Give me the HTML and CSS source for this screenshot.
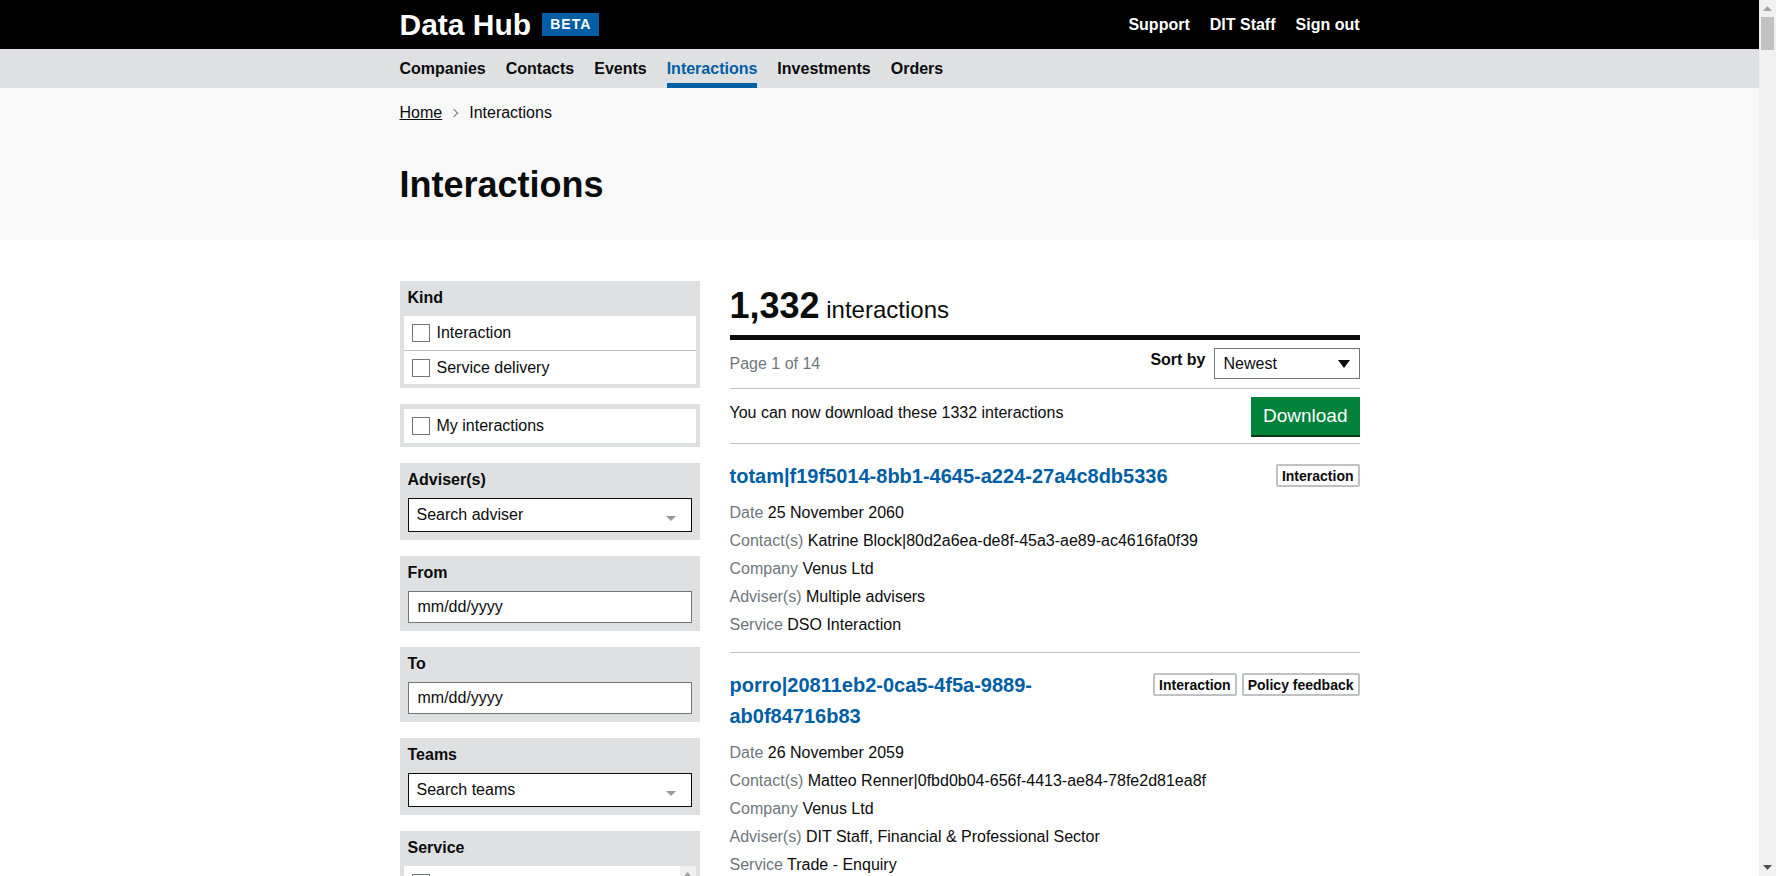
FILE: index.html
```html
<!DOCTYPE html>
<html lang="en">
<head>
<meta charset="utf-8">
<title>Interactions - Data Hub</title>
<link rel="stylesheet" href="styles.css">
</head>
<body>
<header class="site-header">
  <div class="container header-inner">
    <a class="logo" href="#">Data Hub <span class="beta">BETA</span></a>
    <nav class="header-links">
      <a href="#">Support</a>
      <a href="#">DIT Staff</a>
      <a href="#">Sign out</a>
    </nav>
  </div>
</header>
<nav class="main-nav">
  <div class="container nav-inner">
    <a href="#">Companies</a>
    <a href="#">Contacts</a>
    <a href="#">Events</a>
    <a href="#" class="active">Interactions</a>
    <a href="#">Investments</a>
    <a href="#">Orders</a>
  </div>
</nav>
<div class="local-header">
  <div class="container">
    <div class="breadcrumbs"><a href="#">Home</a><span class="chev"></span><span>Interactions</span></div>
    <h1>Interactions</h1>
  </div>
</div>
<main class="container main">
  <aside class="filters">
    <div class="box">
      <div class="box-label">Kind</div>
      <div class="check-list">
        <label class="check-row"><span class="cb"></span>Interaction</label>
        <label class="check-row"><span class="cb"></span>Service delivery</label>
      </div>
    </div>
    <div class="box box-single">
      <div class="check-list">
        <label class="check-row"><span class="cb"></span>My interactions</label>
      </div>
    </div>
    <div class="box">
      <div class="box-label">Adviser(s)</div>
      <div class="field search"><span>Search adviser</span><svg class="caret" width="10" height="5" viewBox="0 0 10 5"><path d="M0 0h10L5 5z" fill="#999"/></svg></div>
    </div>
    <div class="box">
      <div class="box-label">From</div>
      <div class="field date">mm/dd/yyyy</div>
    </div>
    <div class="box">
      <div class="box-label">To</div>
      <div class="field date">mm/dd/yyyy</div>
    </div>
    <div class="box">
      <div class="box-label">Teams</div>
      <div class="field search"><span>Search teams</span><svg class="caret" width="10" height="5" viewBox="0 0 10 5"><path d="M0 0h10L5 5z" fill="#999"/></svg></div>
    </div>
    <div class="box">
      <div class="box-label">Service</div>
      <div class="scroll-wrap">
        <div class="check-list scroll-list">
          <label class="check-row"><span class="cb"></span>Account Management</label>
          <label class="check-row"><span class="cb"></span>Bank Referral</label>
          <label class="check-row"><span class="cb"></span>DSO Interaction</label>
          <label class="check-row"><span class="cb"></span>Events - Overseas</label>
          <label class="check-row"><span class="cb"></span>Trade - Enquiry</label>
          <label class="check-row"><span class="cb"></span>Investment - Services</label>
          <label class="check-row"><span class="cb"></span>Export Win</label>
        </div>
        <div class="mini-track"><svg width="7" height="4" viewBox="0 0 7 4"><path d="M0 4L3.5 0 7 4z" fill="#a3a3a3"/></svg></div>
      </div>
    </div>
    <div class="box">
      <div class="box-label">Sector</div>
      <div class="field search"><span>Search sectors</span><svg class="caret" width="10" height="5" viewBox="0 0 10 5"><path d="M0 0h10L5 5z" fill="#999"/></svg></div>
    </div>
  </aside>

  <section class="results">
    <h2 class="count"><span class="num">1,332</span> interactions</h2>
    <div class="sort-row">
      <span class="page-info">Page 1 of 14</span>
      <div class="sort">
        <span class="sort-label">Sort by</span>
        <div class="select"><span>Newest</span><svg width="12" height="8" viewBox="0 0 12 8"><path d="M0 0h12L6 8z" fill="#0b0c0c"/></svg></div>
      </div>
    </div>
    <div class="download-row">
      <span>You can now download these 1332 interactions</span>
      <a class="button" href="#">Download</a>
    </div>

    <div class="item">
      <div class="item-head">
        <a class="item-title" href="#">totam|f19f5014-8bb1-4645-a224-27a4c8db5336</a>
        <div class="badges"><span class="badge">Interaction</span></div>
      </div>
      <div class="meta">
        <div><span class="k">Date</span> 25 November 2060</div>
        <div><span class="k">Contact(s)</span> Katrine Block|80d2a6ea-de8f-45a3-ae89-ac4616fa0f39</div>
        <div><span class="k">Company</span> Venus Ltd</div>
        <div><span class="k">Adviser(s)</span> Multiple advisers</div>
        <div><span class="k">Service</span> DSO Interaction</div>
      </div>
    </div>

    <div class="item">
      <div class="item-head">
        <a class="item-title" href="#">porro|20811eb2-0ca5-4f5a-9889-ab0f84716b83</a>
        <div class="badges"><span class="badge">Interaction</span><span class="badge">Policy feedback</span></div>
      </div>
      <div class="meta">
        <div><span class="k">Date</span> 26 November 2059</div>
        <div><span class="k">Contact(s)</span> Matteo Renner|0fbd0b04-656f-4413-ae84-78fe2d81ea8f</div>
        <div><span class="k">Company</span> Venus Ltd</div>
        <div><span class="k">Adviser(s)</span> DIT Staff, Financial &amp; Professional Sector</div>
        <div><span class="k">Service</span> Trade - Enquiry</div>
      </div>
    </div>

    <div class="item">
      <div class="item-head">
        <a class="item-title" href="#">dolores|6a1c77e0-3b2d-4e8f-9a11-5c0e2f7d4b19</a>
        <div class="badges"><span class="badge">Service delivery</span></div>
      </div>
      <div class="meta">
        <div><span class="k">Date</span> 14 October 2059</div>
        <div><span class="k">Contact(s)</span> Johnny Cakeman</div>
        <div><span class="k">Company</span> Venus Ltd</div>
        <div><span class="k">Adviser(s)</span> DIT Staff</div>
        <div><span class="k">Service</span> Account Management</div>
      </div>
    </div>

    <div class="item">
      <div class="item-head">
        <a class="item-title" href="#">quia|b2e9d4c1-7f3a-4c55-8e62-0d9a1b3c7e44</a>
        <div class="badges"><span class="badge">Interaction</span></div>
      </div>
      <div class="meta">
        <div><span class="k">Date</span> 2 September 2059</div>
        <div><span class="k">Contact(s)</span> Dean Cox</div>
        <div><span class="k">Company</span> Mars Exports Ltd</div>
        <div><span class="k">Adviser(s)</span> Multiple advisers</div>
        <div><span class="k">Service</span> Bank Referral</div>
      </div>
    </div>
  </section>
</main>

<div class="page-scrollbar" aria-hidden="true">
  <svg class="sb-up" width="9" height="5" viewBox="0 0 9 5"><path d="M0 5L4.5 0 9 5z" fill="#a3a3a3"/></svg>
  <div class="sb-thumb"></div>
  <svg class="sb-down" width="9" height="5" viewBox="0 0 9 5"><path d="M0 0h9L4.5 5z" fill="#505050"/></svg>
</div>
</body>
</html>
```
FILE: styles.css
```css
* { box-sizing: border-box; }
body {
  margin: 0;
  padding-right: 17px;
  font-family: "Liberation Sans", Arial, sans-serif;
  font-size: 16px;
  line-height: 20px;
  color: #0b0c0c;
  background: #fff;
}
a { color: inherit; text-decoration: none; }
.container { width: 960px; margin: 0 auto; }

/* header */
.site-header { background: #000; color: #fff; }
.header-inner {
  height: 49px;
  display: flex;
  align-items: center;
  justify-content: space-between;
}
.logo {
  display: flex;
  align-items: center;
  font-weight: bold;
  font-size: 30px;
  line-height: 30px;
  color: #fff;
}
.beta {
  margin-left: 11px;
  background: #005ea5;
  color: #fff;
  font-size: 14px;
  line-height: 23px;
  letter-spacing: 1px;
  padding: 0 8px 0 8px;
}
.header-links { display: flex; gap: 20px; }
.header-links a { color: #fff; font-weight: bold; font-size: 16px; line-height: 20px; }

/* main nav */
.main-nav { background: #dee0e2; }
.nav-inner { display: flex; }
.nav-inner a {
  display: block;
  font-weight: bold;
  padding: 10px 0 4px;
  border-bottom: 5px solid transparent;
  margin-right: 20px;
}
.nav-inner a.active { color: #005ea5; border-bottom-color: #005ea5; }

/* local header */
.local-header { background: #f8f8f8; padding: 15px 0 35px; }
.breadcrumbs { display: flex; align-items: center; }
.breadcrumbs a { text-decoration: underline; }
.chev {
  display: inline-block;
  width: 6px;
  height: 6px;
  border-top: 1px solid #6f777b;
  border-right: 1px solid #6f777b;
  transform: rotate(45deg);
  margin: 0 12px 0 9px;
}
.local-header h1 {
  margin: 42px 0 0;
  font-size: 36px;
  line-height: 40px;
  font-weight: bold;
}

/* layout */
.main {
  display: grid;
  grid-template-columns: 300px 630px;
  column-gap: 30px;
  padding-top: 41px;
  padding-bottom: 40px;
  align-items: start;
}

/* filters */
.box {
  background: #dee0e2;
  padding: 0 4px 4px;
  margin-bottom: 16px;
}
.box-single { padding-top: 5px; }
.box-label {
  font-weight: bold;
  padding: 7px 4px 8px;
}
.check-list { background: #fff; }
.check-row {
  display: flex;
  align-items: center;
  gap: 7px;
  height: 34px;
  padding: 0 8px;
  border-top: 1px solid #bfc1c3;
}
.check-row:first-child { border-top: 0; }
.cb {
  width: 18px;
  height: 18px;
  border: 1px solid #6f777b;
  background: #fff;
  flex: none;
}
.scroll-wrap { display: flex; background: #fff; }
.scroll-list { flex: 1; height: 170px; overflow: hidden; }
.mini-track {
  width: 16px;
  flex: none;
  background: #f1f1f1;
  display: flex;
  justify-content: center;
  padding-top: 6px;
}
.mini-track svg { display: block; }
.field {
  margin: 0 4px 4px;
  background: #fff;
  display: flex;
  align-items: center;
  padding: 0 8px;
}
.field.search {
  height: 34px;
  border: 1px solid #0b0c0c;
  justify-content: space-between;
  padding-right: 15px;
}
.field.search .caret { margin-top: 7px; }
.field.date {
  height: 32px;
  border: 1px solid #6f777b;
  padding-left: 9px;
}

/* results */
.count {
  margin: 0;
  padding: 5px 0 5px;
  border-bottom: 5px solid #0b0c0c;
  font-size: 24px;
  line-height: 40px;
  font-weight: normal;
}
.count .num { font-size: 36px; font-weight: bold; }
.sort-row {
  display: flex;
  justify-content: space-between;
  align-items: center;
  padding: 8px 0 9px;
  border-bottom: 1px solid #bfc1c3;
}
.page-info { color: #6f777b; }
.sort { display: flex; align-items: center; gap: 8px; }
.sort-label { font-weight: bold; margin-top: -8px; }
.select {
  width: 146px;
  height: 31px;
  border: 1px solid #6f777b;
  display: flex;
  align-items: center;
  justify-content: space-between;
  padding: 0 9px 0 9px;
}
.download-row {
  display: flex;
  justify-content: space-between;
  align-items: flex-start;
  padding: 8px 0 6px;
  border-bottom: 1px solid #bfc1c3;
}
.download-row > span { padding-top: 6px; }
.button {
  display: block;
  background: #00823b;
  color: #fff;
  font-size: 19px;
  line-height: 24px;
  padding: 7px 12px;
  box-shadow: 0 2px 0 #003618;
  margin-bottom: 2px;
}
.item {
  padding: 17px 0 9px;
  border-bottom: 1px solid #bfc1c3;
}
.item-head {
  display: flex;
  justify-content: space-between;
  align-items: flex-start;
  gap: 12px;
}
.item-title {
  color: #005ea5;
  font-size: 20px;
  line-height: 31px;
  font-weight: bold;
}
.badges { display: flex; gap: 5px; flex: none; margin-top: 3px; }
.badge {
  border: 2px solid #bfc1c3;
  border-radius: 2px;
  font-size: 14px;
  line-height: 16px;
  font-weight: bold;
  padding: 2px 4px 1px;
}
.meta { margin-top: 11px; }
.meta > div { margin-bottom: 8px; }
.meta .k { color: #6f777b; }

/* imitation of the browser's page scrollbar (overlay) */
.page-scrollbar {
  position: fixed;
  top: 0;
  right: 0;
  width: 17px;
  height: 100vh;
  background: #f1f1f1;
}
.sb-up { position: absolute; top: 6px; left: 4px; }
.sb-thumb {
  position: absolute;
  top: 17px;
  left: 2px;
  width: 13px;
  height: 33px;
  background: #c1c1c1;
}
.sb-down { position: absolute; bottom: 6px; left: 4px; }
```
